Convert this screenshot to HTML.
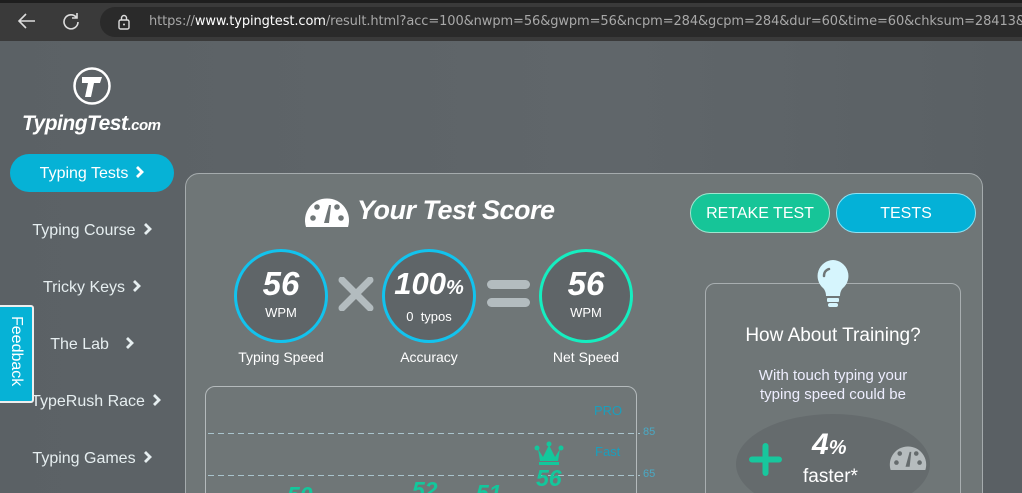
<!DOCTYPE html>
<html><head><meta charset="utf-8"><style>
*{margin:0;padding:0;box-sizing:border-box}
html,body{width:1022px;height:493px;overflow:hidden}
body{background:linear-gradient(90deg,#5b6165,#60666a 60%,#5a6064);font-family:"Liberation Sans",sans-serif;position:relative;color:#fff}
.bar{position:absolute;left:0;top:0;width:1022px;height:41px;background:#3a3a3a;border-top:3px solid #1e1e1e}
.url{position:absolute;left:100px;top:4px;width:940px;height:30px;border-radius:15px;background:#2a2a2a;font-family:"DejaVu Sans",sans-serif;font-size:13px;letter-spacing:-0.1px;color:#a8a8a8;line-height:30px;padding-left:49px;white-space:nowrap;overflow:hidden}
.url b{color:#fff;font-weight:normal}
.abs{position:absolute}
.nav{position:absolute;left:0;width:184px;text-align:center;font-size:16px;color:#e6eef0}
.nav svg{margin-left:7px;vertical-align:-1px}
.card{position:absolute;left:185px;top:173px;width:798px;height:340px;border:1px solid #a5abad;border-radius:14px;background:#6f7677}
.circ{position:absolute;width:94px;height:94px;border-radius:50%;border:3px solid #12c3ee;background:#5f6568;text-align:center}
.circ .n{font-size:33px;font-weight:bold;font-style:italic;margin-top:14px;line-height:36px}
.circ .u{font-size:13px;margin-top:3px}
.lab{position:absolute;font-size:14px;text-align:center;width:120px}
.btn{position:absolute;top:193px;height:40px;width:140px;border-radius:20px;text-align:center;line-height:40px;font-size:16px}
.dash{position:absolute;left:208px;width:432px;height:1px;background:repeating-linear-gradient(90deg,#a9c3cc 0 6px,transparent 6px 10px)}
.g{position:absolute;font-size:23px;font-weight:bold;font-style:italic;color:#13c79c}
</style></head><body>
<div class="bar">
<svg class="abs" style="left:17px;top:9px" width="20" height="18" viewBox="0 0 20 18"><path d="M18 9H3M9 2L2 9l7 7" stroke="#ddd" stroke-width="1.6" fill="none"/></svg>
<svg class="abs" style="left:62px;top:9px" width="18" height="18" viewBox="0 0 18 18"><path d="M14.5 5.5A7 7 0 1 0 16 10M15 1v5h-5" stroke="#ddd" stroke-width="1.6" fill="none"/></svg>
<div class="url">https://<b>www.typingtest.com</b>/result.html?acc=100&amp;nwpm=56&amp;gwpm=56&amp;ncpm=284&amp;gcpm=284&amp;dur=60&amp;time=60&amp;chksum=28413&amp;</div>
<svg class="abs" style="left:118px;top:11px" width="12" height="16" viewBox="0 0 12 16"><rect x="1" y="6" width="10" height="9" rx="1.5" stroke="#ddd" fill="none" stroke-width="1.4"/><path d="M3.5 6V4a2.5 2.5 0 0 1 5 0v2" stroke="#ddd" fill="none" stroke-width="1.4"/><circle cx="6" cy="10.5" r="1" fill="#ddd"/></svg>
</div>
<svg class="abs" style="left:72px;top:66px" width="40" height="40" viewBox="0 0 40 40"><circle cx="20" cy="20" r="17.5" stroke="#fff" stroke-width="2.5" fill="none"/><path d="M10 11h20l-2 6h-6l-3 14h-6l3-14h-6z" fill="#fff"/></svg>
<div class="abs" style="left:22px;top:112px;font-size:21px;font-weight:bold;font-style:italic;letter-spacing:-0.5px">TypingTest<span style="font-size:15px">.com</span></div>
<div class="abs" style="left:10px;top:154px;width:164px;height:38px;border-radius:19px;background:#06b2d6"></div>
<div class="nav" style="top:165px;color:#fff">Typing Tests<svg width="9" height="14" viewBox="0 0 9 14"><path d="M2 2l5 5-5 5" stroke="#fff" stroke-width="2.8" fill="none"/></svg></div>
<div class="nav" style="top:222px">Typing Course<svg width="9" height="14" viewBox="0 0 9 14"><path d="M2 2l5 5-5 5" stroke="#e6eef0" stroke-width="2.8" fill="none"/></svg></div>
<div class="nav" style="top:279px">Tricky Keys<svg width="9" height="14" viewBox="0 0 9 14"><path d="M2 2l5 5-5 5" stroke="#e6eef0" stroke-width="2.8" fill="none"/></svg></div>
<div class="nav" style="top:336px">The Lab &nbsp;<svg width="9" height="14" viewBox="0 0 9 14"><path d="M2 2l5 5-5 5" stroke="#e6eef0" stroke-width="2.8" fill="none"/></svg></div>
<div class="nav" style="top:393px;left:4px">TypeRush Race<svg width="9" height="14" viewBox="0 0 9 14"><path d="M2 2l5 5-5 5" stroke="#e6eef0" stroke-width="2.8" fill="none"/></svg></div>
<div class="nav" style="top:450px">Typing Games<svg width="9" height="14" viewBox="0 0 9 14"><path d="M2 2l5 5-5 5" stroke="#e6eef0" stroke-width="2.8" fill="none"/></svg></div>
<div class="abs" style="left:-3px;top:305px;width:37px;height:98px;background:#06b2d6;border:2px solid #eee;border-radius:3px"></div>
<div class="abs" style="left:7px;top:316px;writing-mode:vertical-rl;font-size:16px;color:#fff">Feedback</div>
<div class="card"></div>
<svg class="abs" style="left:304px;top:192px" width="46" height="36" viewBox="0 0 46 36"><path d="M2 35A22 22 0 1 1 44 35z" fill="#fff"/><circle cx="9" cy="26" r="2.8" fill="#6f7677"/><circle cx="13" cy="15" r="2.8" fill="#6f7677"/><circle cx="33" cy="15" r="2.8" fill="#6f7677"/><circle cx="37" cy="26" r="2.8" fill="#6f7677"/><path d="M20 31l5-18 2 0-2 18z" fill="#6f7677"/></svg>
<div class="abs" style="left:357px;top:195px;font-size:27px;font-weight:bold;font-style:italic;letter-spacing:-0.5px">Your Test Score</div>
<div class="btn" style="left:690px;background:#16c598;border:1px solid #9ee6cf">RETAKE TEST</div>
<div class="btn" style="left:836px;background:#04b1d7;border:1px solid #8de2f4">TESTS</div>
<div class="circ" style="left:234px;top:249px"><div class="n">56</div><div class="u">WPM</div></div>
<div class="circ" style="left:382px;top:249px"><div class="n" style="font-size:31px">100<span style="font-size:20px">%</span></div><div class="u">0&nbsp; typos</div></div>
<div class="circ" style="left:539px;top:249px;border-color:#15eec0"><div class="n">56</div><div class="u">WPM</div></div>
<svg class="abs" style="left:338px;top:277px" width="36" height="34" viewBox="0 0 36 34"><path d="M4 3l28 28M32 3L4 31" stroke="#b3bcbf" stroke-width="7" stroke-linecap="round"/></svg>
<div class="abs" style="left:487px;top:280px;width:43px;height:9px;border-radius:5px;background:#b3bcbf"></div>
<div class="abs" style="left:487px;top:298px;width:43px;height:9px;border-radius:5px;background:#b3bcbf"></div>
<div class="lab" style="left:221px;top:349px">Typing Speed</div>
<div class="lab" style="left:369px;top:349px">Accuracy</div>
<div class="lab" style="left:526px;top:349px">Net Speed</div>
<div class="abs" style="left:205px;top:386px;width:432px;height:130px;border:1px solid #b4babc;border-radius:10px"></div>
<div class="dash" style="top:433px"></div>
<div class="dash" style="top:475px"></div>
<div class="abs" style="left:594px;top:403px;font-size:13px;color:#1a9fbd">PRO</div>
<div class="abs" style="left:595px;top:444px;font-size:13px;color:#1a9fbd">Fast</div>
<div class="abs" style="left:643px;top:426px;font-size:11px;color:#4aa9c4">85</div>
<div class="abs" style="left:643px;top:468px;font-size:11px;color:#4aa9c4">65</div>
<svg class="abs" style="left:534px;top:441px" width="30" height="24" viewBox="0 0 30 24"><path d="M4 8l5 8 6-12 6 12 5-8 -2 12H6z" fill="#13c79c"/><circle cx="3" cy="7" r="2.5" fill="#13c79c"/><circle cx="15" cy="3" r="2.5" fill="#13c79c"/><circle cx="27" cy="7" r="2.5" fill="#13c79c"/><rect x="5" y="21" width="20" height="3" fill="#13c79c"/></svg>
<div class="g" style="left:536px;top:465px">56</div>
<div class="g" style="left:287px;top:482px">50</div>
<div class="g" style="left:412px;top:477px">52</div>
<div class="g" style="left:476px;top:480px">51</div>
<div class="abs" style="left:705px;top:283px;width:256px;height:230px;border:1px solid #a8aeb0;border-radius:10px"></div>
<svg class="abs" style="left:815px;top:259px" width="36" height="50" viewBox="0 0 36 50"><path d="M18 1a16 16 0 0 0-10 28c2 2 3 5 3 8h14c0-3 1-6 3-8A16 16 0 0 0 18 1z" fill="#d6f5fd"/><rect x="12" y="39" width="12" height="4" rx="1" fill="#d6f5fd"/><rect x="13" y="44" width="10" height="4" rx="2" fill="#d6f5fd"/><path d="M9 17c0-4 2-6 5-7" stroke="#6f7677" stroke-width="2.5" fill="none" stroke-linecap="round"/></svg>
<div class="abs" style="left:705px;top:325px;width:256px;text-align:center;font-size:19px">How About Training?</div>
<div class="abs" style="left:705px;top:366px;width:256px;text-align:center;font-size:15px;line-height:19px;color:#eef">With touch typing your<br>typing speed could be</div>
<div class="abs" style="left:736px;top:414px;width:194px;height:100px;border-radius:50%;background:#656b6d"></div>
<svg class="abs" style="left:749px;top:443px" width="33" height="33" viewBox="0 0 33 33"><path d="M16.5 3v27M3 16.5h27" stroke="#17c79d" stroke-width="6" stroke-linecap="round"/></svg>
<div class="abs" style="left:812px;top:428px;font-size:30px;font-weight:bold;font-style:italic">4<span style="font-size:20px">%</span></div>
<div class="abs" style="left:803px;top:466px;font-size:19px">faster*</div>
<svg class="abs" style="left:889px;top:441px" width="38" height="30" viewBox="0 0 46 36"><path d="M2 35A22 22 0 1 1 44 35z" fill="#b6bcbe"/><circle cx="9" cy="26" r="2.8" fill="#656b6d"/><circle cx="13" cy="15" r="2.8" fill="#656b6d"/><circle cx="33" cy="15" r="2.8" fill="#656b6d"/><circle cx="37" cy="26" r="2.8" fill="#656b6d"/><path d="M20 31l5-18 2 0-2 18z" fill="#656b6d"/></svg>
</body></html>
